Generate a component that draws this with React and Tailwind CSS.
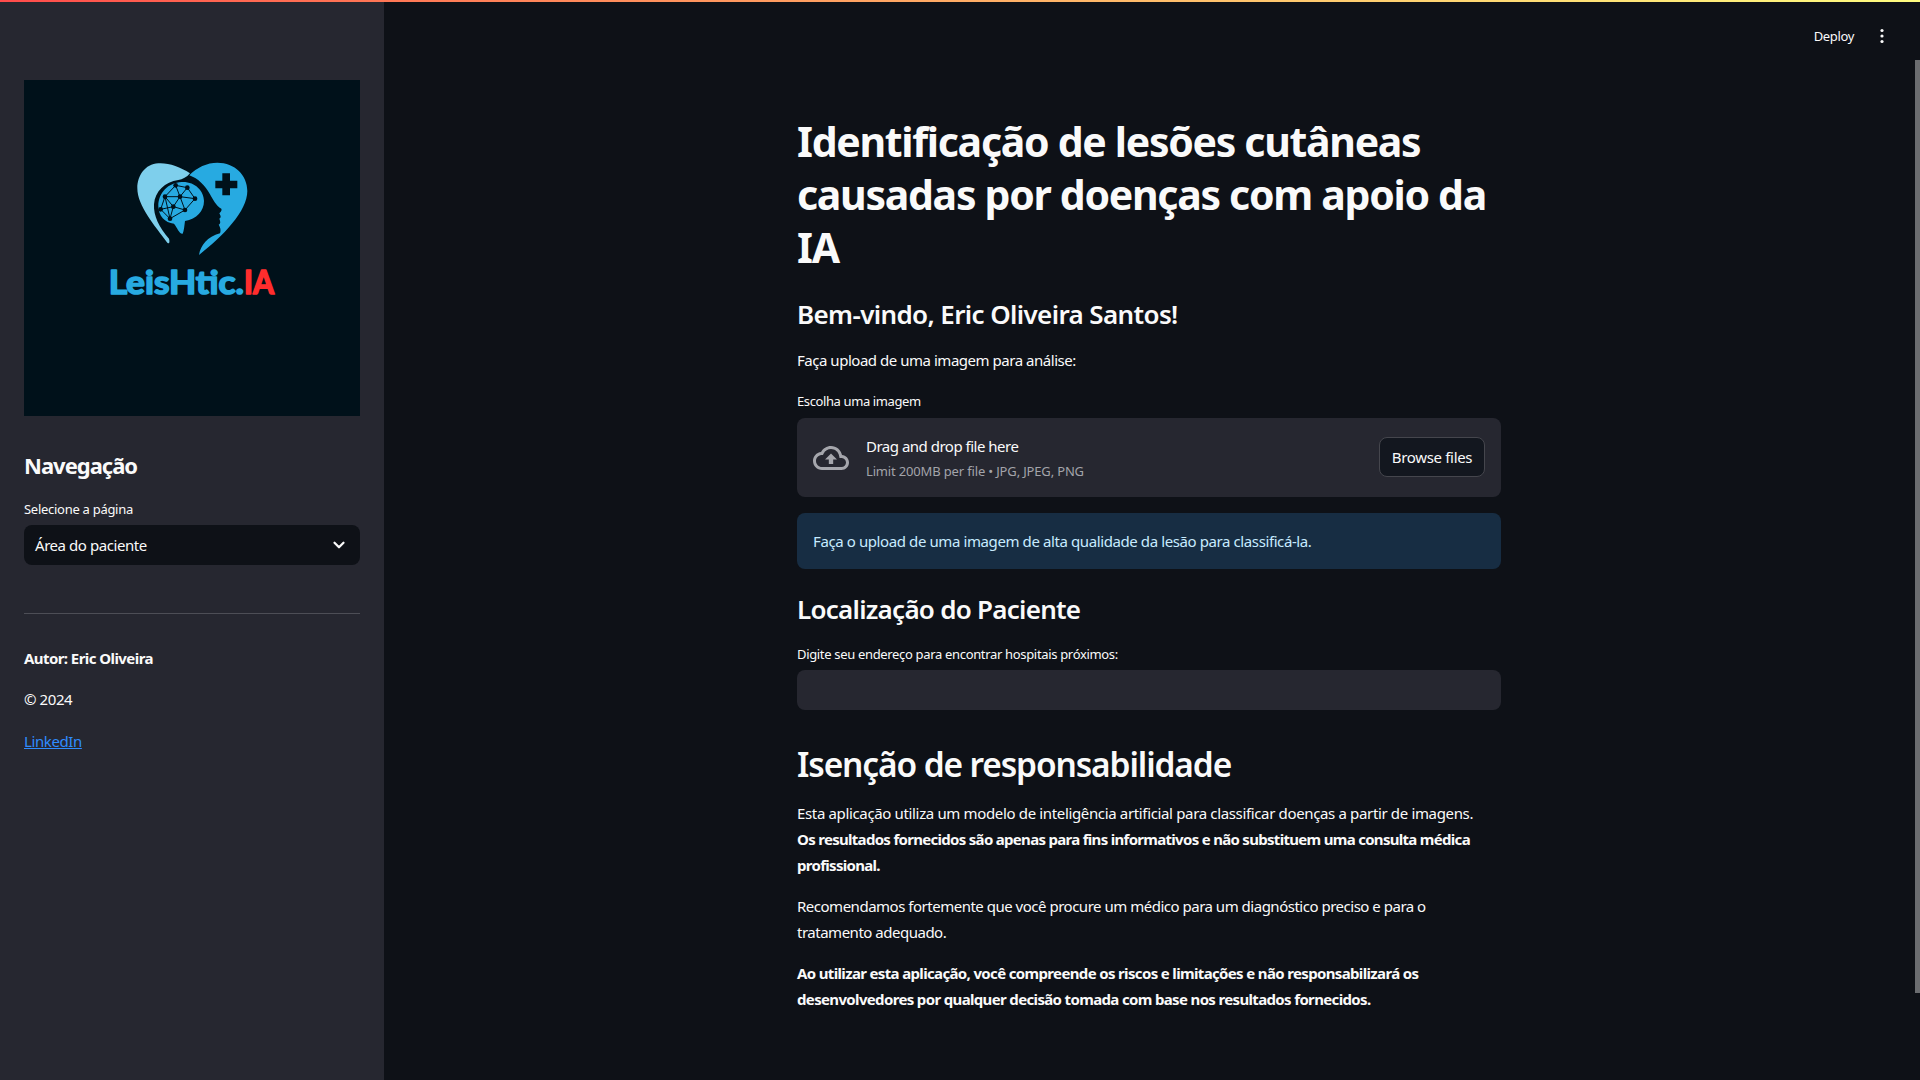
import { ChevronDown } from "lucide-react";

const Logo = () => {
  const nodes = [[137,88],[172,95],[195,128],[150,122],[105,122],[130,152],[92,160],[120,188],[165,162]];
  const edges = [[0,1],[1,2],[0,3],[1,3],[3,2],[0,4],[4,3],[4,5],[3,5],[5,6],[4,6],[6,7],[5,7],[5,8],[3,8],[2,8],[7,8],[4,7]];
  return (
    <svg viewBox="0 0 336 336" className="w-[336px] h-[336px] block bg-[#00111a]">
      <g transform="translate(106 76) scale(0.3333)">
        <path d="M180 52C150 32 115 20 85 22C45 25 22 58 22 97C22 150 75 210 112 260C118 266 120 258 117 248C88 215 70 180 72 145C75 105 105 78 145 72C158 70 170 64 180 52Z" fill="#7ecfec" />
        <path d="M178 58C200 34 232 20 262 20C315 20 352 58 352 105C352 165 280 240 207 297C212 268 232 242 270 232C274 222 270 212 266 206C274 202 270 194 268 188C276 184 270 176 268 172C274 166 276 162 274 158C258 150 250 132 240 115C225 88 205 68 178 58Z" fill="#27aae1" />
        <path d="M85 150C85 110 115 80 155 78C195 76 222 105 222 135C222 165 200 190 165 195C163 210 162 225 158 233C148 235 142 215 132 203C105 200 85 180 85 150Z" fill="#27aae1" />
        <path d="M277 52H300V74H322V97H300V118H277V97H256V74H277Z" fill="#00111a" />
        {edges.map(([a, b], i) => (
          <line key={i} x1={nodes[a][0]} y1={nodes[a][1]} x2={nodes[b][0]} y2={nodes[b][1]} stroke="#00111a" strokeWidth="3" />
        ))}
        {nodes.map(([x, y], i) => (
          <circle key={i} cx={x} cy={y} r="7" fill="#00111a" />
        ))}
      </g>
      <g transform="translate(66 70) scale(0.3333)">
        <text x="56" y="431" fontSize="100" fontWeight="700" textLength="406" lengthAdjust="spacingAndGlyphs" fill="#27aae1" stroke="#27aae1" strokeWidth="5" strokeLinejoin="round" className="font-['Lato',sans-serif]">LeisHtic.</text>
        <text x="462" y="431" fontSize="100" fontWeight="700" textLength="90" lengthAdjust="spacingAndGlyphs" fill="#ff2d2d" stroke="#ff2d2d" strokeWidth="5" strokeLinejoin="round" className="font-['Lato',sans-serif]">IA</text>
      </g>
    </svg>
  );
};

const CloudIcon = () => (
  <svg viewBox="0 0 24 24" className="w-9 h-9 fill-[#a5a6ac] shrink-0">
    <path d="M19.35 10.04C18.67 6.59 15.64 4 12 4 9.11 4 6.6 5.64 5.35 8.04 2.34 8.36 0 10.91 0 14c0 3.31 2.69 6 6 6h13c2.76 0 5-2.24 5-5 0-2.64-2.05-4.78-4.65-4.96zM19 18H6c-2.21 0-4-1.79-4-4 0-2.05 1.53-3.76 3.56-3.97l1.07-.11.5-.95C8.08 7.14 9.94 6 12 6c2.62 0 4.88 1.86 5.39 4.43l.3 1.5 1.53.11c1.56.1 2.78 1.41 2.78 2.96 0 1.65-1.35 3-3 3zM8 13h2.55v3h2.9v-3H16l-4-4z" />
  </svg>
);

const App = () => {
  return (
    <div className="relative flex w-[1920px] h-[1080px] overflow-hidden bg-[#0e1117] text-[#fafafa] font-['Noto_Sans',sans-serif]">
      {/* top gradient line */}
      <div className="absolute top-0 left-0 right-0 h-0.5 bg-gradient-to-r from-[#ff4b4b] to-[#fffd80]" />

      {/* Sidebar */}
      <aside className="w-[384px] shrink-0 h-full bg-[#262730] px-6 pt-20">
        <Logo />
        <h2 className="mt-[32px] text-[22px] leading-[34px] font-bold tracking-[-1px]">Navegação</h2>
        <div className="mt-[17px] text-[13px] leading-5 tracking-[-0.28px]">Selecione a página</div>
        <div className="mt-[6px] h-10 rounded-lg bg-[#0e1117] flex items-center justify-between pl-[11px] pr-3">
          <span className="text-[15px] tracking-[-0.44px]">Área do paciente</span>
          <ChevronDown size={18} strokeWidth={3} />
        </div>
        <div className="mt-12 h-px bg-[#4d4e56]" />
        <div className="mt-[33px] text-[15px] leading-[22px] font-bold tracking-[-0.57px]">Autor: Eric Oliveira</div>
        <div className="mt-[19px] text-[15px] leading-[22px] tracking-[-0.4px]">© 2024</div>
        <a href="#" className="block w-fit mt-[20px] text-[15px] leading-[22px] tracking-[-0.4px] text-[#2f8cff] underline">LinkedIn</a>
      </aside>

      {/* Main */}
      <main className="flex-1 flex justify-center pr-1.5">
        <div className="w-[704px] pt-[115px]">
          <h1 className="text-[41px] leading-[52.8px] font-bold tracking-[-1.3px] whitespace-nowrap">
            Identificação de lesões cutâneas<br />causadas por doenças com apoio da<br />IA
          </h1>
          <h3 className="mt-[24px] text-[26px] leading-[34px] font-semibold tracking-[-0.62px]">Bem-vindo, Eric Oliveira Santos!</h3>
          <p className="mt-[16px] text-[15px] leading-[26px] tracking-[-0.47px]">Faça upload de uma imagem para análise:</p>
          <div className="mt-[18px] text-[13px] leading-5 tracking-[-0.39px]">Escolha uma imagem</div>

          <div className="mt-[7px] h-[79px] rounded-lg bg-[#262730] flex items-center pl-4 pr-4">
            <CloudIcon />
            <div className="ml-[17px] flex-1">
              <div className="text-[15px] leading-6 tracking-[-0.5px]">Drag and drop file here</div>
              <div className="mt-[3px] mb-px text-[13px] leading-5 text-[#a3a4aa] tracking-[-0.16px]">Limit 200MB per file • JPG, JPEG, PNG</div>
            </div>
            <button className="h-10 w-[106px] mb-0.5 rounded-lg border border-[#45464d] bg-[#13171f] text-[15px] tracking-[-0.33px]">Browse files</button>
          </div>

          <div className="mt-4 h-14 rounded-lg bg-[#172d43] text-[#c7ebff] flex items-center px-4 text-[15px] tracking-[-0.4px]">
            Faça o upload de uma imagem de alta qualidade da lesão para classificá-la.
          </div>

          <h3 className="mt-[23px] text-[26px] leading-[34px] font-semibold tracking-[-0.74px]">Localização do Paciente</h3>
          <div className="mt-[18px] text-[13px] leading-5 tracking-[-0.33px]">Digite seu endereço para encontrar hospitais próximos:</div>
          <div className="mt-1.5 h-10 rounded-lg bg-[#262730]" />

          <h2 className="mt-8 text-[33.5px] leading-[44px] font-semibold tracking-[-1.13px]">Isenção de responsabilidade</h2>
          <p className="mt-[15px] text-[15px] leading-[25.6px] tracking-[-0.35px] whitespace-nowrap">
            Esta aplicação utiliza um modelo de inteligência artificial para classificar doenças a partir de imagens.<br />
            <strong className="font-bold tracking-[-0.7px]">Os resultados fornecidos são apenas para fins informativos e não substituem uma consulta médica<br />profissional.</strong>
          </p>
          <p className="mt-4 text-[15px] leading-[25.6px] tracking-[-0.49px] whitespace-nowrap">
            Recomendamos fortemente que você procure um médico para um diagnóstico preciso e para o<br />tratamento adequado.
          </p>
          <p className="mt-4 text-[15px] leading-[25.6px] font-bold tracking-[-0.65px] whitespace-nowrap">
            Ao utilizar esta aplicação, você compreende os riscos e limitações e não responsabilizará os<br />desenvolvedores por qualquer decisão tomada com base nos resultados fornecidos.
          </p>
        </div>
      </main>

      {/* Header actions */}
      <div className="absolute top-[26px] right-[36px] flex items-center gap-[26px]">
        <span className="text-[13px] leading-5 tracking-[-0.35px]">Deploy</span>
        <svg viewBox="0 0 4 16" className="w-1 h-4 fill-[#fafafa]">
          <circle cx="2" cy="2.5" r="1.6" />
          <circle cx="2" cy="8" r="1.6" />
          <circle cx="2" cy="13.5" r="1.6" />
        </svg>
      </div>

      {/* scrollbar */}
      <div className="absolute top-[60px] right-0 w-[5px] h-[933px] bg-[#6b6d70]" />
    </div>
  );
};

export default App;
